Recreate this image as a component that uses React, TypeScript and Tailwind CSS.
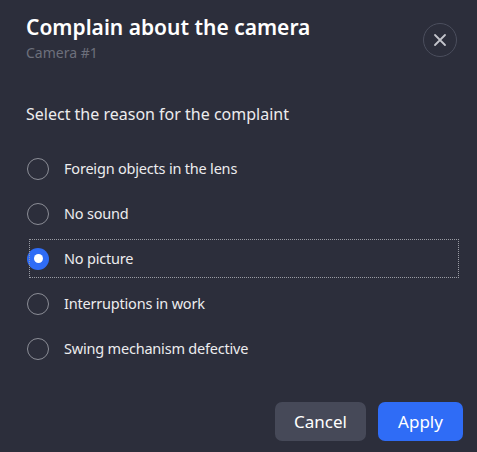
import { useState } from "react";

const REASONS = [
  "Foreign objects in the lens",
  "No sound",
  "No picture",
  "Interruptions in work",
  "Swing mechanism defective",
];

function Radio({ checked }: { checked: boolean }) {
  return checked ? (
    <span className="w-[22px] h-[22px] rounded-full bg-[#2f6cf6] flex items-center justify-center shrink-0">
      <span className="w-[9px] h-[9px] rounded-full bg-white" />
    </span>
  ) : (
    <span className="w-[22px] h-[22px] rounded-full border-[1.5px] border-[#8b8d96] shrink-0" />
  );
}

export default function App() {
  const [selected, setSelected] = useState(2);

  return (
    <div
      className="w-[477px] h-[452px] bg-[#2c2e3b] pl-[26px] pr-[14px] flex flex-col"
      style={{ fontFamily: '"Noto Sans", "Open Sans", sans-serif' }}
    >
      {/* Header */}
      <div className="flex items-start justify-between pt-[13px]">
        <div>
          <h1 className="text-[21px] leading-[28px] font-semibold text-white">Complain about the camera</h1>
          <p className="mt-[3px] text-[14px] leading-[18px] text-[#6d707c]">Camera #1</p>
        </div>
        <button className="mt-[10px] mr-[6px] w-[34px] h-[34px] rounded-full border border-[#4b4e5d] flex items-center justify-center text-[#c3c5cb]">
          <svg width="14" height="14" viewBox="0 0 14 14" fill="none" stroke="currentColor" strokeWidth="1.8" strokeLinecap="round">
            <path d="M2 2L12 12M12 2L2 12" />
          </svg>
        </button>
      </div>

      <p className="mt-[40px] text-[16px] leading-[24px] text-[#ececee]">Select the reason for the complaint</p>

      {/* Reasons */}
      <div className="mt-[23px] flex flex-col gap-[6px] ml-[3px]">
        {REASONS.map((r, i) => (
          <button
            key={r}
            onClick={() => setSelected(i)}
            className={`w-[430px] h-[39px] flex items-center gap-[15px] text-left ${
              selected === i ? "outline-1 outline-dotted outline-[#9a9ca4] -outline-offset-1" : ""
            }`}
          >
            <span className="-ml-[2px] flex">
              <Radio checked={selected === i} />
            </span>
            <span className="text-[14.5px] tracking-[-0.2px] text-[#ececee]">{r}</span>
          </button>
        ))}
      </div>

      {/* Footer */}
      <div className="mt-auto mb-[11px] flex justify-end gap-[12px]">
        <button className="w-[91px] h-[39px] rounded-[7px] bg-[#464958] text-white text-[17px]">Cancel</button>
        <button className="w-[85px] h-[39px] rounded-[7px] bg-[#2f6cf6] text-white text-[17px]">Apply</button>
      </div>
    </div>
  );
}
